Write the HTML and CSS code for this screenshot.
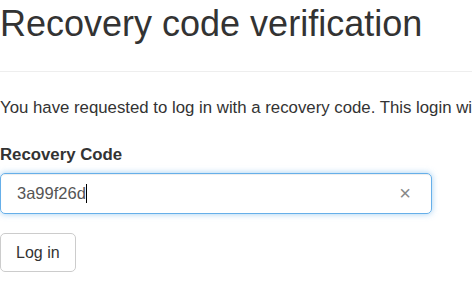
FILE: index.html
```html
<!DOCTYPE html>
<html lang="en">
<head>
  <meta charset="UTF-8">
  <link rel="stylesheet" href="styles.css">
  <title>Recovery code verification</title>
</head>
<body>
  <h1>Recovery code verification</h1>
  <hr>
  <p class="intro">You have requested to log in with a recovery code. This login will not be remembered until you provide an authenticator app code at log in or disable 2FA and log in again.</p>
  <form class="form">
    <div class="form-group">
      <label class="label">Recovery Code</label>
      <div class="input">
        <span class="value">3a99f26d</span><span class="caret"></span>
        <span class="clear">&times;</span>
      </div>
    </div>
    <button type="button" class="btn">Log in</button>
  </form>
</body>
</html>
```

FILE: styles.css
```css
* {
  box-sizing: border-box;
}

body {
  margin: 0;
  font-family: "Liberation Sans", Arial, sans-serif;
  font-size: 16px;
  color: #333;
  background: #fff;
  overflow: hidden;
}

h1 {
  margin: 4px 0 0;
  font-size: 36px;
  font-weight: 400;
  line-height: 40px;
}

hr {
  margin: 27px 0 0;
  border: 0;
  border-top: 1px solid #eee;
}

.intro {
  margin: 25px 0 0;
  font-size: 16.8px;
  line-height: 22px;
  white-space: nowrap;
}

.form-group {
  margin-top: 25px;
}

.label {
  display: block;
  font-size: 16.8px;
  font-weight: 700;
  line-height: 21px;
  margin-bottom: 8px;
}

.input {
  display: flex;
  align-items: center;
  width: 432px;
  height: 41px;
  padding: 0 16px;
  border: 1px solid #66afe9;
  border-radius: 5px;
  box-shadow: inset 0 1px 1px rgba(0,0,0,.075), 0 0 6px rgba(102,175,233,.6);
  font-size: 16.5px;
  color: #555;
}

.caret {
  display: inline-block;
  width: 1px;
  height: 19px;
  background: #000;
}

.clear {
  margin-left: auto;
  margin-right: 4px;
  color: #888;
  font-size: 20px;
}

.btn {
  margin-top: 19px;
  height: 39px;
  padding: 0 15px;
  border: 1px solid #ccc;
  border-radius: 5px;
  background: #fff;
  font-family: inherit;
  font-size: 16px;
  color: #333;
}
```
